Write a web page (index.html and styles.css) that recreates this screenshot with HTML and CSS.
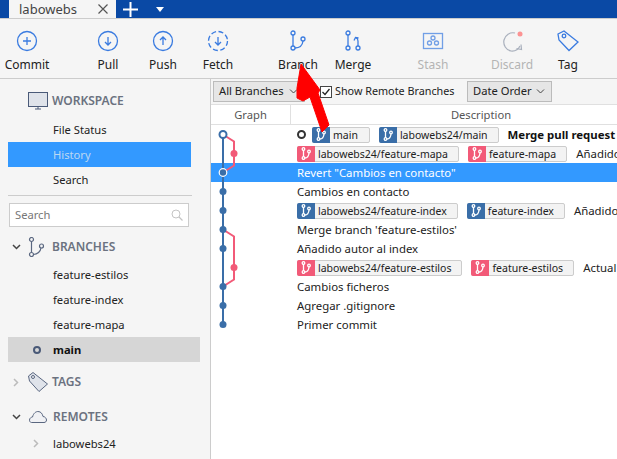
FILE: index.html
```html
<!DOCTYPE html>
<html lang="en">
<head>
	<meta charset="utf-8">
	<title>labowebs</title>
	<link rel="stylesheet" href="styles.css">
</head>
<body>
<div class="tabbar">
	<div class="tab"><span>labowebs</span><svg width="10" height="10" viewBox="0 0 10 10"><path d="M.5.5l9 9M9.5.5l-9 9" stroke="#555" stroke-width="1.2" fill="none"/></svg></div>
	<svg class="tab-add" width="15" height="15" viewBox="0 0 15 15"><path d="M7.5 0v15M0 7.5h15" stroke="#fff" stroke-width="2" fill="none"/></svg>
	<svg class="tab-menu" width="8" height="5" viewBox="0 0 8 5"><path d="M0 0h8L4 5z" fill="#fff"/></svg>
</div>

<div class="toolbar">
	<div class="tool">
		<svg width="22" height="22" viewBox="0 0 22 22"><circle cx="11" cy="11" r="9.5" class="ic"/><path d="M11 7v8M7 11h8" class="ic"/></svg>
		<span>Commit</span>
	</div>
	<div class="tool t-first">
		<svg width="22" height="22" viewBox="0 0 22 22"><circle cx="11" cy="11" r="9.5" class="ic"/><path d="M11 7v8M8 12l3 3 3-3" class="ic"/></svg>
		<span>Pull</span>
	</div>
	<div class="tool">
		<svg width="22" height="22" viewBox="0 0 22 22"><circle cx="11" cy="11" r="9.5" class="ic"/><path d="M11 15V7M8 10l3-3 3 3" class="ic"/></svg>
		<span>Push</span>
	</div>
	<div class="tool">
		<svg width="22" height="22" viewBox="0 0 22 22"><circle cx="11" cy="11" r="9.5" class="ic" stroke-dasharray="5 2.5"/><path d="M11 7v8M8 12l3 3 3-3" class="ic"/></svg>
		<span>Fetch</span>
	</div>
	<div class="tool t-gap">
		<svg width="22" height="22" viewBox="0 0 22 22"><circle cx="6" cy="3" r="2" class="ic"/><circle cx="6" cy="18" r="2" class="ic"/><circle cx="16" cy="9" r="2" class="ic"/><path d="M6 5v11M8 18c5 0 7.500-3 8-7" class="ic"/></svg>
		<span>Branch</span>
	</div>
	<div class="tool">
		<svg width="22" height="22" viewBox="0 0 22 22"><circle cx="6" cy="3" r="2" class="ic"/><circle cx="6" cy="18" r="2" class="ic"/><circle cx="16" cy="18" r="2" class="ic"/><path d="M6 5v11M16 16v-5c0-1.500-.5-2.500-2-3M12 10.500L13.500 7.500l3 .5" class="ic"/></svg>
		<span>Merge</span>
	</div>
	<div class="tool t-gap off">
		<svg width="22" height="22" viewBox="0 0 22 22"><rect x="1.500" y="3.500" width="19" height="15" class="ic"/><circle cx="11" cy="8" r="2" class="ic"/><circle cx="7.500" cy="13" r="2" class="ic"/><circle cx="14.500" cy="13" r="2" class="ic"/></svg>
		<span>Stash</span>
	</div>
	<div class="tool t-gap-s off">
		<svg width="22" height="22" viewBox="0 0 22 22"><path d="M19 16a9 9 0 0 1-9 5 9 9 0 1 1 4-18" stroke="#8a94a6" fill="none" stroke-width="1.200"/><path d="M15.500 18.500l5 1-.5-5" stroke="#8a94a6" fill="none" stroke-width="1.200"/><circle cx="19" cy="4" r="2.500" fill="#ff6a6a"/></svg>
		<span>Discard</span>
	</div>
	<div class="tool t-tag">
		<svg width="22" height="22" viewBox="0 0 22 22"><path d="M1 4l6-3 14 11-9 8.500L2 10z" class="ic"/><circle cx="7" cy="6" r="1.800" class="ic"/></svg>
		<span>Tag</span>
	</div>
</div>

<div class="main">
	<aside class="sidebar">
		<div class="sec sec-workspace">
			<svg width="20" height="18" viewBox="0 0 20 18"><rect x=".5" y=".5" width="19" height="14" fill="#dfe3ea" stroke="#4a5a78"/><path d="M7 17h6M10 15v2" stroke="#4a5a78" fill="none"/></svg>
			<span>WORKSPACE</span>
		</div>
		<div class="nav">File Status</div>
		<div class="nav nav-on">History</div>
		<div class="nav">Search</div>
		<div class="rule"></div>
		<div class="search">
			<span>Search</span>
			<svg width="12" height="12" viewBox="0 0 12 12"><circle cx="5" cy="5" r="4" fill="none" stroke="#c4c4c4"/><path d="M8 8l3.500 3.500" stroke="#c4c4c4" stroke-width="1.300"/></svg>
		</div>
		<div class="sec sec-branches">
			<svg class="chev" width="9" height="6" viewBox="0 0 9 6"><path d="M1 1l3.500 3.500L8 1" fill="none" stroke="#444" stroke-width="1.500"/></svg>
			<svg width="17" height="20" viewBox="0 0 17 20"><circle cx="3.500" cy="2.500" r="2" class="gr"/><circle cx="3.500" cy="17.500" r="2" class="gr"/><circle cx="13.500" cy="9" r="2" class="gr"/><path d="M3.500 4.500v11M5.500 17.500c4 0 7-3 7.500-6.500" class="gr"/></svg>
			<span>BRANCHES</span>
		</div>
		<div class="nav">feature-estilos</div>
		<div class="nav">feature-index</div>
		<div class="nav">feature-mapa</div>
		<div class="nav nav-cur"><i class="cur-dot"></i>main</div>
		<div class="sec sec-tags">
			<svg class="chev" width="6" height="9" viewBox="0 0 6 9"><path d="M1 1l3.500 3.500L1 8" fill="none" stroke="#bbb" stroke-width="1.500"/></svg>
			<svg width="20" height="20" viewBox="0 0 20 20"><path d="M.5 4L5 .5l14.500 11.500-8.500 7.500L1.500 9z" fill="#dfe3ea" stroke="#5a6780"/><circle cx="5" cy="5" r="1.500" fill="#f5f5f5" stroke="#5a6780"/></svg>
			<span>TAGS</span>
		</div>
		<div class="sec sec-remotes">
			<svg class="chev" width="9" height="6" viewBox="0 0 9 6"><path d="M1 1l3.500 3.500L8 1" fill="none" stroke="#444" stroke-width="1.500"/></svg>
			<svg width="18" height="12" viewBox="0 0 18 12"><path d="M4 11.500H2.500C1 11.500.5 10 .5 9c0-2 2-3 3-3C4.500 2 7 .5 9 .5c3 0 4.500 2.500 5 5 2 0 3.500 2 3.500 3.500s-1 2.500-2.500 2.500z" fill="#f0f1f4" stroke="#5a6780"/></svg>
			<span>REMOTES</span>
		</div>
		<div class="nav nav-remote"><svg width="6" height="9" viewBox="0 0 6 9"><path d="M1 1l3.500 3.500L1 8" fill="none" stroke="#bbb" stroke-width="1.500"/></svg>labowebs24</div>
	</aside>

	<section class="log">
		<div class="filters">
			<div class="select sel-branches">All Branches<svg width="9" height="5" viewBox="0 0 9 5"><path d="M1 .5l3.500 3.500L8 .5" fill="none" stroke="#444"/></svg></div>
			<label class="check"><i class="box"><svg width="10" height="10" viewBox="0 0 10 10"><path d="M1.500 5l2.500 2.500L8.500 2" fill="none" stroke="#222" stroke-width="1.300"/></svg></i>Show Remote Branches</label>
			<div class="select sel-order">Date Order<svg width="9" height="5" viewBox="0 0 9 5"><path d="M1 .5l3.500 3.500L8 .5" fill="none" stroke="#444"/></svg></div>
		</div>
		<div class="cols">
			<div class="col-graph">Graph</div>
			<div class="col-desc">Description</div>
		</div>
		<div class="rows">
			<div class="row">
				<i class="head-dot"></i>
				<span class="ref ref-blue ref-main"><b><svg width="10" height="13" viewBox="0 0 10 13"><use href="#br"/></svg></b>main</span>
				<span class="ref ref-blue"><b><svg width="10" height="13" viewBox="0 0 10 13"><use href="#br"/></svg></b>labowebs24/main</span>
				<strong>Merge pull request</strong>
			</div>
			<div class="row">
				<span class="ref ref-pink"><b><svg width="10" height="13" viewBox="0 0 10 13"><use href="#br"/></svg></b>labowebs24/feature-mapa</span>
				<span class="ref ref-pink"><b><svg width="10" height="13" viewBox="0 0 10 13"><use href="#br"/></svg></b>feature-mapa</span>
				<span class="msg">Añadido</span>
			</div>
			<div class="row row-on">Revert "Cambios en contacto"</div>
			<div class="row">Cambios en contacto</div>
			<div class="row">
				<span class="ref ref-blue"><b><svg width="10" height="13" viewBox="0 0 10 13"><use href="#br"/></svg></b>labowebs24/feature-index</span>
				<span class="ref ref-blue"><b><svg width="10" height="13" viewBox="0 0 10 13"><use href="#br"/></svg></b>feature-index</span>
				<span class="msg">Añadido</span>
			</div>
			<div class="row">Merge branch 'feature-estilos'</div>
			<div class="row">Añadido autor al index</div>
			<div class="row">
				<span class="ref ref-pink"><b><svg width="10" height="13" viewBox="0 0 10 13"><use href="#br"/></svg></b>labowebs24/feature-estilos</span>
				<span class="ref ref-pink"><b><svg width="10" height="13" viewBox="0 0 10 13"><use href="#br"/></svg></b>feature-estilos</span>
				<span class="msg">Actual</span>
			</div>
			<div class="row">Cambios ficheros</div>
			<div class="row">Agregar .gitignore</div>
			<div class="row">Primer commit</div>

			<svg class="graph" width="40" height="209" viewBox="0 0 40 209">
				<path d="M12 9.500v190" stroke="#3a6ea8" stroke-width="2" fill="none"/>
				<path d="M12 9.500l11 7v24l-11 7" stroke="#f25a78" stroke-width="2" fill="none"/>
				<path d="M12 104.500l11 7v43l-11 7" stroke="#f25a78" stroke-width="2" fill="none"/>
				<circle cx="23" cy="28.500" r="3.500" fill="#f25a78"/>
				<circle cx="23" cy="142.500" r="3.500" fill="#f25a78"/>
				<circle cx="12" cy="9.500" r="3.500" fill="#fff" stroke="#3a6ea8" stroke-width="2"/>
				<circle cx="12" cy="47.500" r="3.800" fill="#3a6ea8" stroke="#fff" stroke-width="1.200"/>
				<circle cx="12" cy="66.500" r="3.500" fill="#3a6ea8"/>
				<circle cx="12" cy="85.500" r="3.500" fill="#3a6ea8"/>
				<circle cx="12" cy="104.500" r="3.500" fill="#3a6ea8"/>
				<circle cx="12" cy="123.500" r="3.500" fill="#3a6ea8"/>
				<circle cx="12" cy="161.500" r="3.500" fill="#3a6ea8"/>
				<circle cx="12" cy="180.500" r="3.500" fill="#3a6ea8"/>
				<circle cx="12" cy="199.500" r="3.500" fill="#3a6ea8"/>
			</svg>
		</div>
	</section>
</div>

<svg class="arrow" width="44" height="78" viewBox="0 0 44 78"><path d="M11 4l19 26-2 3 11 32-7 7-12-35-7 4-6-3V28z" fill="#f00" stroke="#f00" stroke-linejoin="round"/></svg>

<svg class="defs" width="0" height="0"><defs><g id="br" fill="none" stroke="#fff" stroke-width="1.300"><circle cx="2.500" cy="2" r="1.300"/><circle cx="2.500" cy="11" r="1.300"/><circle cx="8" cy="4.500" r="1.300"/><path d="M2.500 3.300v6.400M3.800 11c2.500 0 4-2.500 4.200-5"/></g></defs></svg>
</body>
</html>
```
FILE: styles.css
```css
html, body{
	margin: 0;
	height: 100%;
	overflow: hidden;
}
body{
	position: relative;
	font: 11.2px / 1.3 "Noto Sans", sans-serif;
	color: #222;
	background: #f5f5f5;
}
.defs{
	position: absolute;
}

/* tabs */
.tabbar{
	height: 18px;
	background: #0a49a5;
	display: flex;
	align-items: center;
}
.tab{
	margin-left: 9px;
	width: 107px;
	height: 18px;
	background: #f5f5f5;
	display: flex;
	align-items: center;
	justify-content: space-between;
	padding: 0 8px 0 10px;
	box-sizing: border-box;
	color: #444;
	font-size: 13px;
}
.tab-add{
	margin-left: 7px;
}
.tab-menu{
	margin-left: 18px;
}

/* toolbar */
.toolbar{
	height: 61px;
	border-bottom: 1px solid #ccc;
	border-top: 1px solid #ccc;
	box-sizing: border-box;
	display: flex;
	gap: 1px;
	font-size: 12px;
}
.tool{
	width: 54px;
	display: flex;
	flex-direction: column;
	align-items: center;
	padding-top: 11px;
	gap: 5px;
	color: #222;
}
.t-first{
	margin-left: 26px;
}
.t-gap{
	margin-left: 25px;
}
.t-gap-s{
	margin-left: 24px;
}
.t-tag{
	margin-left: 1px;
}
.tool svg{
	display: block;
}
.ic{
	fill: none;
	stroke: #3a7be0;
	stroke-width: 1.300;
}
.off span{
	color: #999;
}
.off{
	opacity: .7;
}

/* main split */
.main{
	display: grid;
	grid-template-columns: 211px 1fr;
	height: 380px;
}
.sidebar{
	border-right: 1px solid #ccc;
	padding-top: 12px;
	box-sizing: border-box;
	min-width: 0;
}
.gr{
	fill: none;
	stroke: #5a6780;
	stroke-width: 1.200;
}
.sec{
	display: flex;
	align-items: center;
	height: 20px;
	color: #6b7280;
	font-weight: 600;
	font-size: 12px;
}
.sec-workspace{
	padding-left: 28px;
	gap: 4px;
}
.nav{
	height: 25px;
	line-height: 25px;
	margin-left: 8px;
	padding-left: 45px;
}
.sec-workspace + .nav{
	margin-top: 6px;
}
.nav-on{
	width: 138px;
	background: #3399ff;
	color: #bcd7f2;
}
.rule{
	height: 1px;
	background: #ccc;
	width: 184px;
	margin: 3px 0 0 8px;
}
.search{
	margin: 7px 0 0 9px;
	width: 180px;
	height: 24px;
	box-sizing: border-box;
	border: 1px solid #ccc;
	background: #fff;
	color: #777;
	display: flex;
	align-items: center;
	justify-content: space-between;
	padding: 0 5px;
}
.sec-branches{
	margin-top: 10px;
	padding-left: 12px;
	gap: 7px;
	margin-bottom: 5px;
}
.nav-cur{
	width: 147px;
	background: #d6d6d6;
	font-weight: 700;
	color: #111;
	position: relative;
}
.cur-dot{
	position: absolute;
	left: 25px;
	top: 9px;
	width: 4px;
	height: 4px;
	border: 2px solid #4a5a78;
	border-radius: 50%;
}
.sec-tags{
	margin-top: 10px;
	padding-left: 13px;
	gap: 4px;
}
.sec-tags .chev{
	margin-right: 5px;
}
.sec-remotes{
	margin-top: 15px;
	padding-left: 12px;
	gap: 6px;
}
.sec-remotes .chev{
	margin-right: 2px;
}
.nav-remote{
	position: relative;
	margin-top: 4px;
}
.nav-remote svg{
	position: absolute;
	left: 25px;
	top: 8px;
}

/* log */
.log{
	background: #fff;
	min-width: 0;
	overflow: hidden;
}
.filters{
	height: 25px;
	background: #f5f5f5;
	display: flex;
	align-items: center;
	padding-left: 2px;
	box-sizing: border-box;
}
.select{
	height: 21px;
	box-sizing: border-box;
	border: 1px solid #bbb;
	background: #e6e6e6;
	display: flex;
	align-items: center;
	justify-content: space-between;
	padding: 0 6px 0 5px;
}
.sel-branches{
	width: 92px;
}
.sel-order{
	width: 85px;
}
.check{
	display: flex;
	align-items: center;
	gap: 3px;
	margin-left: 15px;
	width: 147px;
	font-size: 10.800px;
}
.box{
	width: 12px;
	height: 12px;
	box-sizing: border-box;
	border: 1px solid #444;
	background: #fff;
	display: block;
}
.box svg{
	display: block;
}
.cols{
	height: 21px;
	display: grid;
	grid-template-columns: 80px 380px;
	border-bottom: 1px solid #e0e0e0;
	border-top: 1px solid #e0e0e0;
	color: #555;
	text-align: center;
	line-height: 19px;
	box-sizing: border-box;
}
.col-graph{
	border-right: 1px solid #e0e0e0;
}
.rows{
	position: relative;
}
.row{
	height: 19px;
	line-height: 19px;
	padding-left: 86px;
	display: flex;
	align-items: center;
	gap: 9px;
	white-space: nowrap;
	overflow: hidden;
	font-size: 11.400px;
}
.row-on{
	background: #3399ff;
	color: #fff;
}
.graph{
	position: absolute;
	left: 0;
	top: 0;
}
.head-dot{
	width: 5px;
	height: 5px;
	border: 2px solid #333;
	border-radius: 50%;
	flex: none;
	margin-right: -3px;
}
.ref{
	display: inline-flex;
	align-items: center;
	height: 16px;
	box-sizing: border-box;
	border: 1px solid #ccc;
	border-radius: 2px;
	background: #f3f3f3;
	padding-right: 10px;
	flex: none;
	line-height: 14px;
	font-size: 10.500px;
}
.ref-main{
	padding-right: 11px;
}
.ref b{
	width: 18px;
	height: 16px;
	margin: 0 3px 0 -1px;
	display: flex;
	align-items: center;
	justify-content: center;
	border-radius: 2px 0 0 2px;
	flex: none;
}
.ref-blue b{
	background: #3a6ea8;
}
.ref-pink b{
	background: #f25a78;
}
strong{
	font-weight: 700;
	color: #111;
}

/* annotation drawn over the shot */
.arrow{
	position: absolute;
	left: 290px;
	top: 60px;
}
```
